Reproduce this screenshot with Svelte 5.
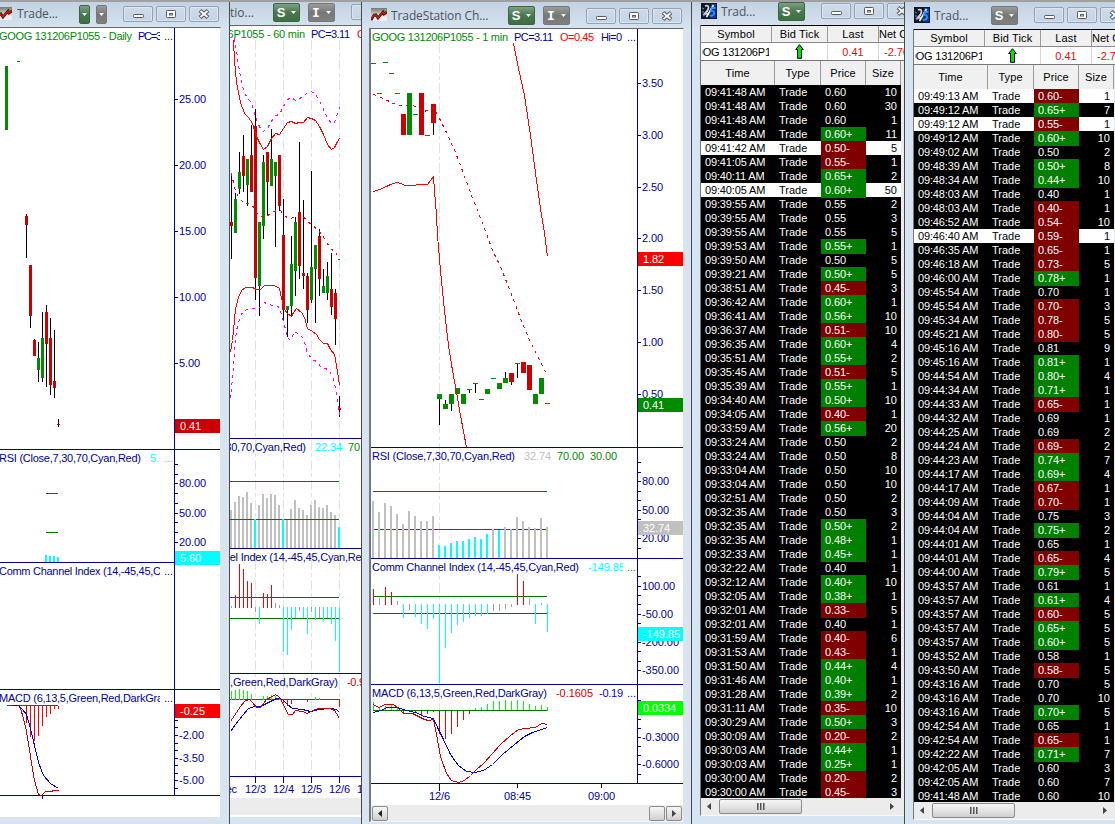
<script>
  const NAVY = '#00009c', GREEN = '#008b00', DKRED = '#cc0000', RED = '#ff0000', CYAN = '#00ffff', GRAY = '#c0c0c0', LIME = '#00ff00';
  const MAG = '#ff00ff', DG = '#007800', CG = '#a0a0a0', BLUE = '#0000d8';
  const HUE = { r: DKRED, g: GREEN };

  // Rectangles are [x, y, width, height, colour].
  const candles = (list, half) =>
    list.flatMap(([x, hue, top, bottom, high, low]) => [
      [x, high, 1, low - high, '#000'],
      [x - half, top, half * 2 + 1, bottom - top, HUE[hue]]
    ]);
  const bars = (x0, step, width, base, list) =>
    list.map(([top, c], i) => [x0 + i * step, Math.min(top, base), width, Math.abs(base - top) + (width === 1 ? 1 : 0), c]);
  const g = (n, c = GRAY) => [n, c];
  const ticks = (x, ys) => ys.map((y) => [x, y, 4, 1, NAVY]);
  const scale = (x, list) => list.map(([y, s, w]) => ({ x, y, s, w, c: NAVY }));
  const hline = (x, w, y, c = NAVY) => [x, y, w, 1, c];

  const daily = {
    box: [0, 28, 220, 789],
    grid: [],
    rects: [
      ...candles([
        [26, 'r', 216, 225, 214, 258], [30, 'r', 265, 316, 265, 328], [34, 'r', 340, 356, 339, 356], [38, 'g', 358, 370, 342, 382],
        [42, 'g', 338, 378, 312, 382], [46, 'r', 312, 344, 305, 387], [50, 'r', 338, 385, 318, 395], [54, 'r', 381, 388, 330, 398],
        [58, 'r', 424, 425, 419, 427]
      ], 1),
      [5, 66, 3, 64, GREEN], [17, 61, 3, 1, GREEN],
      hline(0, 220, 449), hline(0, 175, 562), hline(0, 220, 689), hline(0, 220, 795), [42, 795, 1, 4, NAVY],
      [174, 28, 1, 768, NAVY],
      ...ticks(174, [99, 165, 231, 297, 363, 464, 474, 483, 493, 503, 513, 522, 532, 542, 720, 727, 735, 743, 750, 758, 765, 773, 780, 788]),
      hline(46, 12, 493, DG), hline(46, 12, 532, DG), hline(12, 46, 705, DG),
      [45, 555, 2, 7, CYAN], [49, 556, 2, 6, CYAN], [53, 556, 2, 6, CYAN], [57, 557, 2, 5, CYAN],
      ...bars(26, 4, 1, 706, [g(722, DKRED), g(736, RED), g(740, RED), g(735, RED), g(725, RED), g(716, RED), g(713, RED), g(708, RED), g(708, RED)])
    ],
    lines: [
      [DKRED, '6,705 18,705 20,708 23,718 26,731 30,756 34,780 38,794 41,795 45,791 50,791 54,790 58,790'],
      [BLUE, '12,705 18,705 22,709 26,714 30,728 34,745 38,762 43,775 50,783 58,788']
    ],
    texts: [
      { x: -1, y: 36, s: 'GOOG 131206P1055 - Daily', w: 133, c: GREEN }, { x: 138, y: 36, s: 'PC=3', w: 24, c: NAVY },
      { x: -1, y: 458, s: 'RSI (Close,7,30,70,Cyan,Red)', w: 142, c: NAVY }, { x: 150, y: 458, s: '5.6', w: 15, c: CYAN },
      { x: -1, y: 571, s: 'Comm Channel Index (14,-45,45,C', w: 162, c: NAVY },
      { x: -1, y: 698, s: 'MACD (6,13,5,Green,Red,DarkGra', w: 164, c: NAVY }
    ],
    cover: [[160, 29, 14, 14], [160, 451, 14, 14], [160, 564, 14, 14], [160, 691, 14, 14]],
    after: [
      { x: 164, y: 36, s: '...', w: 9, c: NAVY }, { x: 164, y: 458, s: '...', w: 9, c: CYAN },
      { x: 164, y: 571, s: '...', w: 9, c: NAVY }, { x: 164, y: 698, s: '...', w: 9, c: NAVY },
      ...scale(179, [[99, '25.00', 27], [165, '20.00', 27], [231, '15.00', 27], [297, '10.00', 27], [363, '5.00', 21], [483, '80.00', 27], [513, '50.00', 27], [542, '20.00', 27], [735, '-2.00', 25], [758, '-3.50', 25], [780, '-5.00', 25]])
    ],
    tags: [[175, 419, '0.41', DKRED, 21], [175, 551, '5.60', CYAN, 21], [175, 704, '-0.25', RED, 25]]
  };

  const hourly = {
    box: [230, 26, 131, 772],
    grid: [255, 283, 311, 339].map((x) => [x, 40, 776]),
    rects: [
      ...bars(230, 4, 2, 548, [g(510), g(502), g(496), g(497), g(492), g(503), g(519, CYAN), g(505), g(494), g(498), g(494), g(495), g(505), g(519, CYAN), g(519), g(509), g(500), g(508), g(510), g(515), g(505), g(500), g(507), g(508), g(505), g(512), g(515), g(527, CYAN)]),
      hline(230, 109, 481, DG), hline(230, 109, 519, DG), hline(230, 109, 597, DG), hline(230, 109, 618, DG), hline(230, 109, 699, DG),
      [254, 519, 2, 29, CYAN], [282, 519, 2, 29, CYAN],
      ...bars(231, 4, 1, 607, [g(606, CG), g(595, RED), g(564, RED), g(569, RED), g(581, RED), g(583, RED), g(611, CG), g(623, CYAN), g(593, RED), g(594, RED), g(585, RED), g(603, CG), g(605, CG), g(651, CYAN), g(654, CYAN), g(629, CYAN), g(617, CYAN), g(610, CG), g(617, CYAN), g(633, CYAN), g(611, CG), g(619, CYAN), g(617, CG), g(621, CYAN), g(617, CYAN), g(623, CYAN), g(640, CYAN), g(671, CYAN)]),
      ...bars(231, 4, 1, 699, [g(691, LIME), g(690, LIME), g(689, LIME), g(690, LIME), g(691, LIME), g(694, LIME), g(699, DG), g(699, DG), g(696, LIME), g(696, LIME), g(695, LIME), g(696, LIME), g(698, LIME), g(702, RED), g(705, RED), g(703, RED), g(699, DG), g(699, DG), g(699, DG), g(701, RED), g(699, DG), g(697, LIME), g(698, LIME), g(699, DG), g(699, DG), g(699, DG), g(699, DG), g(706, RED)]),
      hline(230, 131, 438), hline(230, 131, 548), hline(230, 131, 673), hline(230, 131, 776),
      ...[255, 283, 311, 339].map((x) => [x, 776, 1, 7, NAVY]),
      ...candles([
        [231, 'r', 222, 226, 173, 259], [235, 'g', 199, 233, 193, 233], [239, 'g', 172, 189, 152, 194], [243, 'r', 156, 176, 135, 192],
        [247, 'g', 159, 185, 159, 206], [251, 'r', 155, 192, 125, 192], [255, 'r', 126, 278, 109, 300], [259, 'g', 222, 286, 222, 316],
        [263, 'g', 162, 226, 155, 239], [267, 'r', 152, 182, 152, 216], [271, 'g', 159, 186, 129, 186], [275, 'g', 162, 176, 162, 247],
        [279, 'r', 155, 206, 155, 211], [283, 'r', 235, 310, 199, 321], [287, 'g', 306, 310, 306, 337], [291, 'g', 264, 306, 236, 316],
        [295, 'g', 222, 271, 217, 296], [299, 'r', 212, 266, 142, 279], [303, 'r', 273, 276, 200, 289], [307, 'r', 276, 310, 273, 323],
        [311, 'g', 267, 300, 171, 303], [315, 'g', 245, 269, 245, 323], [319, 'r', 236, 279, 229, 296], [323, 'g', 286, 293, 269, 293],
        [327, 'g', 276, 293, 262, 300], [331, 'r', 289, 307, 253, 315], [335, 'r', 293, 319, 289, 345], [339, 'r', 408, 410, 396, 417]
      ], 1)
    ],
    lines: [
      [MAG, '234,38 236,50 238,65 241,82 244,93 247,97 251,103 254,113 257,122 260,128 263,131 267,128 270,122 275,115 279,114 283,106 287,99 291,97 295,100 299,98 303,96 307,92 311,91 315,94 319,100 323,109 327,118 331,123 335,121 337,113 339,107', '3 4'],
      [RED, '233,40 234,60 236,82 240,102 244,113 248,117 252,123 256,136 260,144 263,149 267,146 271,138 275,133 279,134 283,128 287,122 291,121 295,123 299,122 303,122 307,117 311,118 315,120 319,126 323,134 327,144 331,149 334,147 337,141 339,138'],
      [RED, '231,173 234,187 238,197 242,201 247,203 252,205 256,212 260,216 265,217 270,213 276,210 280,210 284,215 288,218 296,217 302,215 306,220 312,225 317,229 322,235 326,242 331,249 335,251 339,260', '3 4'],
      [RED, '230,352 232,340 233,330 235,308 238,297 241,290 245,287 252,287 256,289 260,289 264,285 274,285 279,288 281,298 284,309 287,313 291,316 293,312 296,308 301,312 304,317 307,328 312,331 316,334 319,339 323,343 327,343 330,349 334,354 336,365 338,378 339,385'],
      [MAG, '230,398 232,378 234,350 236,330 240,315 244,310 249,308 260,307 264,302 268,304 278,306 281,314 284,325 287,337 290,340 294,331 300,335 303,338 307,353 312,359 316,361 320,366 325,368 329,370 333,379 336,392 338,405 339,415', '3 4'],
      [BLUE, '230,731 235,724 242,715 248,708 254,706 260,706 266,703 272,700 276,698 282,699 287,704 292,708 302,709 310,711 318,709 330,708 336,709 339,712'],
      [DKRED, '230,721 234,715 240,706 245,700 249,699 252,702 256,707 260,707 263,703 266,699 270,697 275,694 278,696 281,700 285,709 288,714 292,714 295,710 302,711 307,713 312,710 318,708 330,708 334,710 336,713 339,718']
    ],
    texts: [
      { x: 162, y: 34, s: 'GOOG 131206P1055 - 60 min', w: 143, c: GREEN }, { x: 311, y: 34, s: 'PC=3.11', w: 39, c: NAVY }, { x: 357, y: 34, s: 'O=0.45', w: 35, c: RED },
      { x: 162, y: 447, s: 'RSI (Close,7,30,70,Cyan,Red)', w: 144, c: NAVY }, { x: 315, y: 447, s: '22.34', w: 27, c: CYAN }, { x: 348, y: 447, s: '70.00', w: 27, c: GREEN },
      { x: 164, y: 557, s: 'Comm Channel Index (14,-45,45,Cyan,Red)', w: 207, c: NAVY },
      { x: 162, y: 682, s: 'MACD (6,13,5,Green,Red,DarkGray)', w: 176, c: NAVY }, { x: 347, y: 682, s: '-0.9', w: 18, c: DKRED },
      { x: 218, y: 789, s: 'Dec', w: 19, c: NAVY }, { x: 245, y: 789, s: '12/3', w: 21, c: NAVY }, { x: 273, y: 789, s: '12/4', w: 21, c: NAVY },
      { x: 301, y: 789, s: '12/5', w: 21, c: NAVY }, { x: 329, y: 789, s: '12/6', w: 21, c: NAVY }, { x: 357, y: 789, s: '12/9', w: 21, c: NAVY }
    ],
    cover: [], after: [], tags: []
  };

  const dash = (x, y) => [x, y, 5, 1, GREEN];
  const minute = {
    box: [371, 29, 312, 776],
    grid: [[439, 43, 783]],
    rects: [
      dash(371, 63), dash(383, 62), dash(389, 73), dash(377, 93), dash(395, 93), dash(413, 114), dash(425, 135),
      ...candles([
        [403, 'r', 114, 135, 114, 135], [409, 'g', 93, 135, 93, 135], [421, 'r', 93, 135, 93, 135], [433, 'r', 104, 123, 104, 135],
        [439, 'g', 394, 399, 394, 425], [445, 'g', 404, 409, 400, 409], [451, 'g', 394, 404, 394, 411], [457, 'g', 388, 394, 388, 394],
        [463, 'g', 394, 404, 394, 404], [469, 'g', 389, 390, 389, 393], [475, 'g', 383, 384, 383, 393], [481, 'g', 399, 400, 399, 400],
        [487, 'g', 389, 394, 389, 394], [493, 'g', 378, 379, 378, 379], [499, 'g', 383, 389, 383, 389], [505, 'g', 378, 383, 372, 383],
        [511, 'r', 373, 382, 373, 385], [517, 'g', 363, 364, 363, 378], [523, 'r', 362, 373, 362, 373], [529, 'r', 365, 390, 365, 390],
        [535, 'g', 394, 404, 394, 404], [541, 'g', 378, 394, 378, 394], [547, 'g', 403, 404, 403, 404]
      ], 2),
      hline(373, 174, 491, DG), hline(373, 174, 529, DG), hline(373, 174, 596, DG), hline(373, 174, 613, DG), hline(373, 174, 710, DG),
      ...bars(372, 6, 2, 558, [
        ...[501, 512, 503, 506, 514, 524, 511, 516, 521, 521, 516].map((n) => g(n)),
        ...[545, 546, 543, 541, 541, 539, 537, 539, 534].map((n) => g(n, CYAN)),
        g(529), g(530, CYAN), ...[527, 529, 517, 521, 527, 528, 518, 527].map((n) => g(n))
      ]),
      ...bars(373, 6, 1, 604, [g(589, RED), g(598, CG), g(587, RED), g(592, RED), g(601, CG), g(617, CYAN), g(609, CG), g(616, CYAN), g(623, CYAN), g(628, CYAN), g(618, CYAN), g(682, CYAN), g(647, CYAN), g(632, CYAN), g(624, CYAN), g(621, CYAN), g(617, CYAN), g(615, CYAN), g(615, CYAN), g(613, CYAN), g(610, CG), g(610, CG), g(608, CG), g(606, CG), g(574, RED), g(581, RED), g(599, CG), g(623, CYAN), g(603, CYAN), g(631, CYAN)]),
      ...bars(373, 6, 1, 710, [g(702, LIME), g(708, LIME), g(706, LIME), g(705, LIME), g(708, LIME), g(713, RED), g(711, RED), g(712, RED), g(714, RED), g(713, RED), g(711, RED), g(733, DKRED), g(738, RED), g(733, RED), g(726, RED), g(719, RED), g(713, RED), g(708, LIME), g(707, LIME), g(704, LIME), g(701, LIME), g(701, LIME), g(700, LIME), g(701, LIME), g(700, LIME), g(701, LIME), g(704, LIME), g(706, LIME), g(705, LIME), g(707, LIME)]),
      hline(373, 174, 710, DG),
      hline(371, 312, 447), hline(371, 312, 558), hline(371, 312, 684), hline(371, 312, 783),
      [637, 29, 1, 755, NAVY], [439, 783, 1, 8, NAVY], [517, 783, 1, 5, NAVY], [601, 783, 1, 5, NAVY],
      ...ticks(637, [83, 135, 187, 238, 290, 342, 394, 462, 472, 481, 491, 500, 510, 519, 538, 548, 576, 586, 595, 604, 614, 623, 642, 651, 661, 670, 700, 719, 728, 737, 746, 755, 764, 774])
    ],
    lines: [
      [RED, '373,191 379,189 386,186 390,184 396,182 401,183 404,185 427,184 430,180 433,176 434,190 436,215 437,235 440,270 444,310 448,345 452,370 456,392 460,415 466,447'],
      [RED, '513,43 518,68 524,95 530,135 536,180 541,215 544,232 547,256'],
      [RED, '373,94 380,97 387,100 393,103 400,105 410,105 416,106 422,111 428,110 433,107 440,120 447,134 455,152 463,173 471,195 479,215 487,236 492,250 499,264 510,291 520,318 530,342 538,357 543,368 547,374', '3 4'],
      [BLUE, '373,712 380,710 387,707 397,707 406,710 415,712 424,716 433,718 438,729 443,739 450,754 458,765 466,771 474,772 483,770 492,764 502,754 514,744 524,736 532,732 547,727'],
      [DKRED, '373,704 378,707 385,704 393,704 398,708 403,713 412,713 418,716 424,719 428,720 433,719 436,734 440,756 446,773 451,780 458,782 464,780 470,775 476,769 483,763 492,753 500,744 510,735 518,729 525,728 535,727 541,723 547,724']
    ],
    texts: [
      { x: 372, y: 37, s: 'GOOG 131206P1055 - 1 min', w: 136, c: GREEN }, { x: 514, y: 37, s: 'PC=3.11', w: 39, c: NAVY }, { x: 560, y: 37, s: 'O=0.45', w: 34, c: RED }, { x: 601, y: 37, s: 'Hi=0', w: 21, c: NAVY },
      { x: 372, y: 456, s: 'RSI (Close,7,30,70,Cyan,Red)', w: 143, c: NAVY }, { x: 524, y: 456, s: '32.74', w: 27, c: GRAY }, { x: 557, y: 456, s: '70.00', w: 27, c: GREEN }, { x: 590, y: 456, s: '30.00', w: 27, c: GREEN },
      { x: 372, y: 567, s: 'Comm Channel Index (14,-45,45,Cyan,Red)', w: 207, c: NAVY }, { x: 588, y: 567, s: '-149.85', w: 37, c: CYAN },
      { x: 372, y: 693, s: 'MACD (6,13,5,Green,Red,DarkGray)', w: 175, c: NAVY }, { x: 556, y: 693, s: '-0.1605', w: 37, c: DKRED }, { x: 599, y: 693, s: '-0.19', w: 24, c: BLUE },
      { x: 429, y: 796, s: '12/6', w: 21, c: NAVY }, { x: 504, y: 796, s: '08:45', w: 27, c: NAVY }, { x: 588, y: 796, s: '09:00', w: 27, c: NAVY }
    ],
    cover: [[623, 560, 14, 14]],
    after: [
      { x: 627, y: 37, s: '...', w: 9, c: NAVY }, { x: 627, y: 567, s: '...', w: 9, c: GREEN }, { x: 627, y: 693, s: '...', w: 9, c: BLUE },
      ...scale(642, [[83, '3.50', 21], [135, '3.00', 21], [187, '2.50', 21], [238, '2.00', 21], [290, '1.50', 21], [342, '1.00', 21], [394, '0.50', 21], [481, '80.00', 27], [510, '50.00', 27], [538, '20.00', 27], [586, '100.00', 33], [614, '-50.00', 31], [642, '-200.00', 37], [670, '-350.00', 37], [737, '-0.3000', 37], [764, '-0.6000', 37]])
    ],
    tags: [[638, 252, '1.82', RED, 21], [638, 398, '0.41', GREEN, 21], [638, 521, '32.74', GRAY, 27], [638, 627, '-149.85', CYAN, 37], [638, 701, '0.0334', LIME, 33]]
  };

  const parse = (raw, lit) =>
    raw.trim().split(/\s*\n\s*/).map((line, i) => {
      const [time, price, size] = line.split(' ');
      const dir = price.endsWith('+') ? 'up' : price.endsWith('-') ? 'down' : '';
      return { time: time + ' AM', price, size, dir, lit: lit.includes(i) };
    });

  const tapeA = parse(`09:41:48 0.60 10
    09:41:48 0.60 30
    09:41:48 0.60 1
    09:41:48 0.60+ 11
    09:41:42 0.50- 5
    09:41:05 0.55- 1
    09:40:11 0.65+ 2
    09:40:05 0.60+ 50
    09:39:55 0.55 2
    09:39:55 0.55 3
    09:39:55 0.55 5
    09:39:53 0.55+ 1
    09:39:50 0.50 5
    09:39:21 0.50+ 5
    09:38:51 0.45- 3
    09:36:42 0.60+ 1
    09:36:41 0.56+ 10
    09:36:37 0.51- 10
    09:36:35 0.60+ 4
    09:35:51 0.55+ 2
    09:35:45 0.51- 5
    09:35:39 0.55+ 1
    09:34:40 0.50+ 10
    09:34:05 0.40- 1
    09:33:59 0.56+ 20
    09:33:24 0.50 2
    09:33:24 0.50 8
    09:33:04 0.50 10
    09:33:04 0.50 10
    09:32:51 0.50 2
    09:32:35 0.50 3
    09:32:35 0.50+ 2
    09:32:35 0.48+ 1
    09:32:33 0.45+ 1
    09:32:22 0.40 1
    09:32:12 0.40+ 10
    09:32:05 0.38+ 1
    09:32:01 0.33- 5
    09:32:01 0.40 1
    09:31:59 0.40- 6
    09:31:53 0.43- 1
    09:31:50 0.44+ 4
    09:31:46 0.40+ 1
    09:31:28 0.39+ 2
    09:31:11 0.35- 10
    09:30:29 0.50+ 3
    09:30:09 0.20- 2
    09:30:03 0.44+ 1
    09:30:03 0.25+ 1
    09:30:00 0.20- 2
    09:30:00 0.45- 3`, [4, 7]);

  const tapeB = parse(`09:49:13 0.60- 1
    09:49:12 0.65+ 7
    09:49:12 0.55- 1
    09:49:12 0.60+ 10
    09:49:02 0.50 2
    09:48:39 0.50+ 8
    09:48:34 0.44+ 10
    09:48:03 0.40 1
    09:48:03 0.40- 1
    09:46:52 0.54- 10
    09:46:40 0.59- 1
    09:46:35 0.65- 1
    09:46:18 0.73- 5
    09:46:00 0.78+ 1
    09:45:54 0.70 1
    09:45:54 0.70- 3
    09:45:34 0.78- 5
    09:45:21 0.80- 5
    09:45:16 0.81 9
    09:45:16 0.81+ 1
    09:44:54 0.80+ 4
    09:44:34 0.71+ 1
    09:44:33 0.65- 1
    09:44:32 0.69 1
    09:44:25 0.69 2
    09:44:24 0.69- 2
    09:44:23 0.74+ 7
    09:44:17 0.69+ 4
    09:44:17 0.67- 1
    09:44:09 0.70- 1
    09:44:04 0.75 3
    09:44:04 0.75+ 2
    09:44:01 0.65 1
    09:44:01 0.65- 4
    09:44:00 0.79+ 5
    09:43:57 0.61 1
    09:43:57 0.61+ 4
    09:43:57 0.60- 5
    09:43:57 0.65+ 5
    09:43:57 0.60+ 5
    09:43:52 0.58 1
    09:43:50 0.58- 5
    09:43:16 0.70 5
    09:43:16 0.70 10
    09:43:16 0.70+ 5
    09:42:54 0.65 1
    09:42:54 0.65- 1
    09:42:22 0.71+ 7
    09:42:05 0.60 3
    09:42:05 0.60 7
    09:41:48 0.60 10`, [0, 2, 10]);
</script>

{#snippet label(t)}
  <text x={t.x} y={t.y + 4} fill={t.c} textLength={t.w}>{t.s}</text>
{/snippet}

{#snippet chart(c)}
  <svg class="chart" viewBox={c.box.join(' ')} width={c.box[2]} height={c.box[3]}>
    <g shape-rendering="crispEdges">
      {#each c.grid as [x, y1, y2]}
        <path d="M{x + 0.5} {y1}V{y2}" stroke="#e2e2e2" stroke-dasharray="10 3 4 3" />
      {/each}
      {#each c.rects as [x, y, w, h, fill]}
        <rect {x} {y} width={w} height={h} {fill} />
      {/each}
      {#each c.lines as [stroke, points, pattern]}
        <polyline {points} fill="none" {stroke} stroke-dasharray={pattern} transform="translate(.5 .5)" />
      {/each}
    </g>
    {#each c.texts as t}{@render label(t)}{/each}
    {#each c.cover as [x, y, w, h]}<rect {x} {y} width={w} height={h} fill="#fff" />{/each}
    {#each c.after as t}{@render label(t)}{/each}
    {#each c.tags as [x, y, s, fill, w]}
      <rect {x} {y} width="45" height="14" {fill} />
      <text x={x + 5} y={y + 11} fill="#fff" textLength={w}>{s}</text>
    {/each}
  </svg>
{/snippet}

{#snippet chartIcon()}
  <svg class="icon" width="16" height="16" viewBox="0 0 16 16">
    <defs><linearGradient id="ci" x1="0" y1="0" x2="0" y2="1"><stop offset="0" stop-color="#777" /><stop offset=".7" stop-color="#eee" /></linearGradient></defs>
    <rect y="1" width="16" height="13" fill="url(#ci)" />
    <path d="M5 6V10M13 3V8" stroke="#00d818" stroke-width="2" />
    <path d="M0 13L3 8L5 8L7 11L12 5L13 7L16 5" fill="none" stroke="#111" stroke-width="2.6" />
    <path d="M0 12L3 8L5 8L7 11L12 5L13 7L16 4" fill="none" stroke="#e01010" stroke-width="1.5" />
  </svg>
{/snippet}

{#snippet tapeIcon()}
  <svg class="icon" width="16" height="16" viewBox="0 0 16 16">
    <rect width="16" height="16" fill="#101828" />
    <path d="M10 1H15V15H9Z" fill="#0a3a98" />
    <path d="M4 3Q7.500 1.500 7.500 5Q7 8 3.500 11H7.500" fill="none" stroke="#cfd6de" stroke-width="1.700" />
    <path d="M1 5L3 6M1 9H3M2 13L4 12" stroke="#8793a0" />
    <path d="M5.500 14L12.500 2" fill="none" stroke="#fff" stroke-width="1.600" />
    <path d="M14.500 5H10.800L10 8Q13.500 7.500 13 10.500Q12.500 13.500 8.500 12.500" fill="none" stroke="#2f90ff" stroke-width="1.800" />
  </svg>
{/snippet}

{#snippet badge(letter, tone)}
  <span class="badge {tone}" class:slim={!letter}>
    {#if letter}<b class:serif={letter === 'I'}>{letter}</b>{/if}
    <svg width="5" height="3" viewBox="0 0 5 3"><path d="M0 0H5L2.500 3Z" fill="#fff" /></svg>
  </span>
{/snippet}

{#snippet controls()}
  <div class="controls">
    <span><svg width="30" height="16" viewBox="0 0 30 16"><rect x="10.500" y="8.500" width="10" height="3" rx=".8" fill="#fff" stroke="#565a62" /></svg></span>
    <span><svg width="30" height="16" viewBox="0 0 30 16"><rect x="10.500" y="4.500" width="9" height="7" rx=".8" fill="#fff" stroke="#565a62" /><rect x="13.500" y="7.500" width="3" height="1.500" fill="#fff" stroke="#565a62" /></svg></span>
    <span><svg width="30" height="16" viewBox="0 0 30 16"><path d="M11 4.500L19 11.500M19 4.500L11 11.500" stroke="#565a62" stroke-width="4" /><path d="M11.500 5L18.500 11M18.500 5L11.500 11" stroke="#fff" stroke-width="1.800" /></svg></span>
  </div>
{/snippet}

{#snippet tape(rows)}
  <div class="quote">
    <div class="qrow qhead"><span>Symbol</span><span>Bid Tick</span><span>Last</span><span class="net">Net Change</span></div>
    <div class="qrow">
      <span class="sym"><i>GOOG 131206P1055</i></span>
      <span><svg width="9" height="15" viewBox="0 0 9 15"><path d="M4.500 .7L8.300 5.500H6.500V14.300H2.500V5.500H.7Z" fill="#00e400" stroke="#000" stroke-width="1" /></svg></span>
      <span class="neg">0.41</span><span class="neg change">-2.70</span>
    </div>
  </div>
  <div class="listing">
    <div class="trow thead"><span>Time</span><span>Type</span><span>Price</span><span>Size</span></div>
    <div class="rows">
      {#each rows as r}
        <div class="trow" class:lit={r.lit}>
          <span class="time">{r.time}</span><span class="type">Trade</span><span class="price {r.dir}">{r.price}</span><span class="size">{r.size}</span>
        </div>
      {/each}
    </div>
    <div class="hscroll tapebar">
      <svg width="5" height="7" viewBox="0 0 5 7"><path d="M4 0V7L0 3.500Z" fill="#444" /></svg>
      <div class="grip"><i></i><i></i><i></i></div>
      <svg class="far" width="5" height="7" viewBox="0 0 5 7"><path d="M0 0V7L4 3.500Z" fill="#444" /></svg>
    </div>
  </div>
{/snippet}

<div class="desk">
  <section class="win w1">
    <header>
      {@render chartIcon()}<span class="title">Trade...</span>
      {@render badge('', 'green')}{@render badge('', 'gray')}{@render controls()}
    </header>
    <div class="client">{@render chart(daily)}</div>
  </section>

  <section class="win w2">
    <header>
      <span class="title">tio...</span>
      {@render badge('S', 'green')}{@render badge('I', 'gray')}{@render controls()}
    </header>
    <div class="client">{@render chart(hourly)}<div class="hscroll"></div></div>
  </section>

  <section class="win w3">
    <header>
      {@render chartIcon()}<span class="title">TradeStation Ch...</span>
      {@render badge('S', 'green')}{@render badge('I', 'gray')}{@render controls()}
    </header>
    <div class="client">
      {@render chart(minute)}
      <div class="hscroll">
        <div class="btn"><svg width="5" height="7" viewBox="0 0 5 7"><path d="M4 0V7L0 3.500Z" fill="#222" /></svg></div>
        <div class="btn thumb"></div>
        <div class="btn"><svg width="5" height="7" viewBox="0 0 5 7"><path d="M0 0V7L4 3.500Z" fill="#444" /></svg></div>
      </div>
    </div>
  </section>

  <section class="win w4">
    <header>{@render tapeIcon()}<span class="title">Trad...</span>{@render badge('S', 'green')}{@render controls()}</header>
    <div class="client">{@render tape(tapeA)}</div>
  </section>

  <section class="win w5">
    <header>{@render tapeIcon()}<span class="title">Trad...</span>{@render badge('S', 'gray')}{@render controls()}</header>
    <div class="client">{@render tape(tapeB)}</div>
  </section>
</div>

<style>
  :global(body) { margin: 0; overflow: hidden; }
  .desk { position: relative; width: 1115px; height: 824px; overflow: hidden; background: #a0a0a0; font: 11px/14px "Liberation Sans", Arial, sans-serif; }
  .win { position: absolute; top: 2px; height: 822px; box-sizing: border-box; overflow: hidden; background: linear-gradient(#c3d2e2, #d7e4f1 28px); border-right: 1px solid #4a4a4a; }
  .w1 { left: 0; width: 230px; }
  .w2 { left: 230px; width: 132px; }
  .w3 { left: 362px; width: 330px; }
  .w4 { left: 692px; width: 213px; }
  .w5 { left: 905px; width: 210px; border-right: 0; }

  header { display: flex; align-items: flex-start; box-sizing: border-box; height: 25px; }
  .icon { flex: none; }
  .title { flex: none; box-sizing: border-box; font: 12px/18px "Open Sans", "Noto Sans", sans-serif; letter-spacing: -0.1px; color: #4b5361; white-space: nowrap; overflow: hidden; }
  .badge { flex: none; box-sizing: border-box; display: flex; align-items: center; justify-content: center; gap: 6px; width: 27px; height: 19px; border: 1px solid #50705a; border-radius: 2px; color: #fff; }
  .badge.green { background: linear-gradient(#7e9f83, #4a7850 50%, #3c7040); border-color: #3c6444; }
  .badge.gray { background: linear-gradient(#9a9c9c, #777 50%, #808080); border-color: #777; }
  .badge.slim { width: 11px; }
  .badge b { font: bold 13px/16px "Liberation Sans", Arial, sans-serif; }
  .badge b.serif { font-family: "DejaVu Sans Mono", monospace; width: 8px; }
  .controls { display: flex; gap: 3px; flex: none; }
  .controls span { box-sizing: border-box; width: 30px; height: 16px; border: 1px solid #94a2b8; border-radius: 2px; box-shadow: inset 0 0 0 1px #dbe5f1; background: linear-gradient(#cfdbe9, #c6d3e3); }
  .controls svg { display: block; margin: -1px; }

  .client { background: #fff; box-sizing: border-box; display: flex; flex-direction: column; }
  .chart { display: block; flex: none; }
  .chart text { white-space: pre; }

  .w1 header { padding-top: 3px; }
  .w1 .icon { margin: 1px 0 0 -4px; }
  .w1 .title { width: 62px; margin: 0 0 0 5px; }
  .w1 .badge { margin-right: 6px; }
  .w1 .badge + .badge { margin-right: 16px; }
  .w1 .controls { margin-top: 1px; }
  .w1 .client { width: 221px; height: 791px; border-top: 1px solid #666; border-right: 1px solid #e3e3e3; border-bottom: 1px solid #e3e3e3; }

  .w2 header { padding-top: 1px; height: 23px; }
  .w2 .title { width: 41px; margin-top: 1px; letter-spacing: 0; }
  .w2 .badge { margin-left: 2px; margin-right: 6px; }
  .w2 .badge + .badge { margin-right: 16px; }
  .w2 .controls { margin-top: 1px; }
  .w2 .client { border-top: 1px solid #666; height: 792px; }
  .w2 .hscroll { flex: 1; border-bottom: 2px solid #fff; }

  .w3 header { padding: 4px 0 0 9px; height: 26px; }
  .w3 .icon { margin-top: 1px; }
  .w3 .title { width: 117px; margin-left: 4px; margin-top: 1px; }
  .w3 .badge { margin-right: 8px; }
  .w3 .badge + .badge { margin-right: 16px; }
  .w3 .controls { margin-top: 2px; }
  .w3 .client { width: 315px; height: 794px; margin-left: 7px; border: 1px solid #666; border-left: 2px solid #777; border-right-color: #e3e3e3; border-bottom-color: #f4f4f4; }

  .hscroll { display: flex; align-items: center; background: #ececec; box-sizing: border-box; }
  .w3 .hscroll { height: 17px; gap: 1px; padding: 0 1px; }
  .btn { box-sizing: border-box; width: 16px; height: 15px; border: 1px solid #8c8c8c; border-radius: 2px; background: linear-gradient(#f6f6f6, #e4e4e4 50%, #cfcfcf); display: flex; align-items: center; justify-content: center; }
  .thumb { margin-left: auto; }

  .w4 header, .w5 header { padding: 0 0 0 9px; height: 23px; }
  .w4 .icon, .w5 .icon { margin-top: 1px; }
  .w4 .title, .w5 .title { width: 57px; margin-left: 4px; margin-top: 1px; }
  .w4 .badge, .w5 .badge { margin-right: 16px; }
  .w4 .controls { margin-top: 1px; }
  .w5 header { padding-top: 4px; height: 27px; }
  .w5 .controls { margin-top: 1px; }
  .w4 .client, .w5 .client { width: 204px; height: 791px; margin-left: 8px; background: #ececec; border-left: 1px solid #777; }
  .w4 .client { border-bottom: 1px solid #f8f8f8; }
  .w5 .client { width: 202px; border-bottom: 1px solid #f8f8f8; }

  .quote { border-top: 1px solid #000; background: #fff; height: 35px; box-sizing: border-box; flex: none; overflow: hidden; }
  .qrow { display: grid; grid-template-columns: 71px 56px 51px 60px; height: 17px; line-height: 18px; color: #000; }
  .qrow > span { border-right: 1px solid #d8d8d8; display: flex; justify-content: center; align-items: center; overflow: hidden; white-space: nowrap; }
  .qhead { height: 16px; background: #f0f0f0; border-bottom: 1px solid #8a8a8a; letter-spacing: 0.15px; }
  .qhead > span { border-color: #9a9a9a; }
  .qhead .net { justify-content: flex-start; padding-left: 0; letter-spacing: 0; }
  .qrow .sym { justify-content: flex-start; margin: 0 3px 0 1px; border-right: 0; }
  .sym i { font-style: normal; margin-left: -16px; letter-spacing: -0.2px; }
  .neg { color: #f00; }
  .qrow .change { justify-content: flex-start; padding-left: 5px; }

  .listing { border-top: 1px solid #777; flex: 1; min-height: 0; display: flex; flex-direction: column; }
  .trow { display: grid; grid-template-columns: 74px 46px 45px 35px; width: 200px; height: 14px; line-height: 15px; background: #000; color: #fff; }
  .trow span { white-space: nowrap; }
  .thead { height: 24px; flex: none; width: 200px; background: #f0f0f0; color: #000; line-height: 25px; text-align: center; }
  .thead span { border-right: 1px solid #9a9a9a; letter-spacing: 0.1px; }
  .lit { background: #fff; color: #000; }
  .rows { flex: 1; min-height: 0; overflow: hidden; }
  .time { padding-left: 4px; letter-spacing: -0.14px; }
  .type { padding-left: 4px; }
  .price { padding-left: 4px; letter-spacing: -0.1px; }
  .up { background: #008000; color: #fff; }
  .down { background: #800000; color: #fff; }
  .size { text-align: right; padding-right: 4px; }
  .tapebar { height: 17px; flex: none; width: 200px; padding: 0 6px; }
  .grip { margin-left: 7px; width: 83px; height: 15px; box-sizing: border-box; border: 1px solid #8c8c8c; border-radius: 2px; background: linear-gradient(#f6f6f6, #e4e4e4 50%, #cfcfcf); display: flex; align-items: center; justify-content: center; gap: 1px; }
  .grip i { width: 2px; height: 7px; background: linear-gradient(90deg, #555 50%, #999 50%); }
  .far { margin-left: auto; }
</style>
